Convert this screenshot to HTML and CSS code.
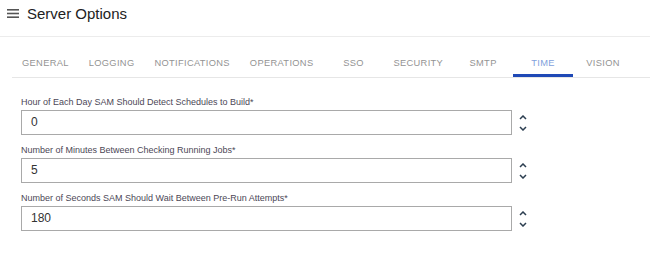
FILE: index.html
```
<!DOCTYPE html>
<html>
<head>
<meta charset="utf-8">
<link rel="stylesheet" href="styles.css">
</head>
<body>
<div class="header">
  <svg class="menu" width="12" height="9" viewBox="0 0 12 9"><rect y="0" width="12" height="1.6" fill="#555"/><rect y="3.7" width="12" height="1.6" fill="#555"/><rect y="7.4" width="12" height="1.6" fill="#555"/></svg>
  <span class="title">Server Options</span>
</div>
<div class="tabs">
  <div class="tab">GENERAL</div>
  <div class="tab">LOGGING</div>
  <div class="tab">NOTIFICATIONS</div>
  <div class="tab">OPERATIONS</div>
  <div class="tab">SSO</div>
  <div class="tab">SECURITY</div>
  <div class="tab">SMTP</div>
  <div class="tab active">TIME</div>
  <div class="tab">VISION</div>
</div>
<div class="form">
  <div class="field">
    <div class="label">Hour of Each Day SAM Should Detect Schedules to Build*</div>
    <div class="row">
      <div class="input">0</div>
      <div class="spin">
        <svg width="8" height="5" viewBox="0 0 8 5"><path d="M1 4 L4 1 L7 4" fill="none" stroke="#2c3e50" stroke-width="1.5"/></svg>
        <svg width="8" height="5" viewBox="0 0 8 5"><path d="M1 1 L4 4 L7 1" fill="none" stroke="#2c3e50" stroke-width="1.5"/></svg>
      </div>
    </div>
  </div>
  <div class="field">
    <div class="label">Number of Minutes Between Checking Running Jobs*</div>
    <div class="row">
      <div class="input">5</div>
      <div class="spin">
        <svg width="8" height="5" viewBox="0 0 8 5"><path d="M1 4 L4 1 L7 4" fill="none" stroke="#2c3e50" stroke-width="1.5"/></svg>
        <svg width="8" height="5" viewBox="0 0 8 5"><path d="M1 1 L4 4 L7 1" fill="none" stroke="#2c3e50" stroke-width="1.5"/></svg>
      </div>
    </div>
  </div>
  <div class="field">
    <div class="label">Number of Seconds SAM Should Wait Between Pre-Run Attempts*</div>
    <div class="row">
      <div class="input">180</div>
      <div class="spin">
        <svg width="8" height="5" viewBox="0 0 8 5"><path d="M1 4 L4 1 L7 4" fill="none" stroke="#2c3e50" stroke-width="1.5"/></svg>
        <svg width="8" height="5" viewBox="0 0 8 5"><path d="M1 1 L4 4 L7 1" fill="none" stroke="#2c3e50" stroke-width="1.5"/></svg>
      </div>
    </div>
  </div>
</div>
</body>
</html>
```
FILE: styles.css
```
html, body {
  margin: 0;
  padding: 0;
  background: #fff;
  font-family: "Liberation Sans", Arial, sans-serif;
}
.header {
  height: 37px;
  border-bottom: 1px solid #ececec;
  display: flex;
  align-items: center;
  padding-left: 7px;
  box-sizing: border-box;
  padding-bottom: 9px;
}
.menu {
  display: block;
  margin-right: 8px;
}
.title {
  font-size: 15px;
  color: #222;
}
.tabs {
  display: flex;
  margin: 13px 0 0 12px;
  border-bottom: 1px solid #e6e6e6;
  height: 27px;
}
.tab {
  min-width: 60px;
  box-sizing: border-box;
  padding: 0 10px;
  text-align: center;
  font-size: 9.3px;
  letter-spacing: 0.33px;
  line-height: 27px;
  color: #939393;
  border-bottom: 3px solid transparent;
}
.tab.active {
  color: #7f9fdc;
  border-bottom-color: #1f49b6;
}
.form {
  padding: 19px 0 0 21px;
}
.field {
  margin-bottom: 10px;
}
.label {
  font-size: 9px;
  color: #4c4756;
  line-height: 11px;
  margin-bottom: 2px;
}
.row {
  display: flex;
  align-items: center;
}
.input {
  width: 491px;
  height: 25px;
  box-sizing: border-box;
  border: 1px solid #a9a9a9;
  font-size: 12px;
  color: #333;
  line-height: 23px;
  padding-left: 9px;
}
.spin {
  display: flex;
  flex-direction: column;
  gap: 6px;
  margin-left: 7px;
}
.spin svg {
  display: block;
}
```
